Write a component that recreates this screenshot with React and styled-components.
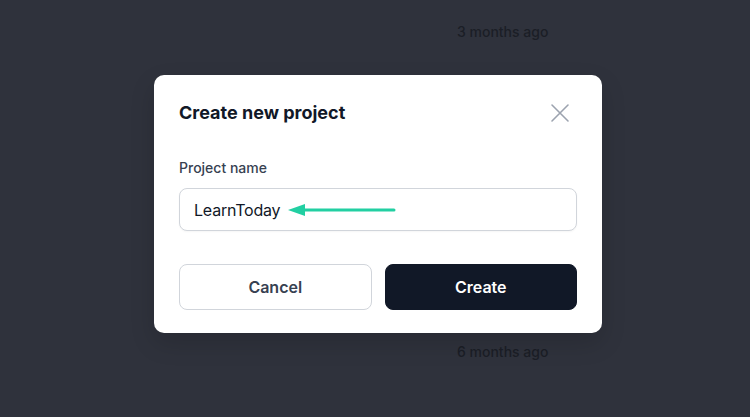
import React from 'react';
import styled, { createGlobalStyle } from 'styled-components';

const Global = createGlobalStyle`
  html, body {
    margin: 0;
    padding: 0;
    background: #2f323c;
  }
  body {
    font-family: 'Inter', 'Liberation Sans', sans-serif;
  }
`;

const Page = styled.div`
  position: relative;
  width: 750px;
  height: 417px;
  overflow: hidden;
  background: #2f323c;
`;

const List = styled.div`
  display: flex;
  flex-direction: column;
  padding: 22px 0 0 457px;
`;

const ListRow = styled.div`
  height: 320px;
  font-size: 14px;
  line-height: 20px;
  font-weight: 500;
  color: #1b1e26;

  &:last-child {
    height: auto;
  }
`;

const Overlay = styled.div`
  position: absolute;
  inset: 0;
  display: flex;
  align-items: flex-start;
  padding: 75px 0 0 154px;
`;

const Dialog = styled.div`
  width: 448px;
  box-sizing: border-box;
  padding: 24px 25px 23px;
  background: #ffffff;
  border-radius: 10px;
  box-shadow: 0 10px 25px rgba(0, 0, 0, 0.15);
`;

const Header = styled.div`
  display: flex;
  align-items: center;
  justify-content: space-between;
`;

const Title = styled.h2`
  margin: 0;
  font-size: 18px;
  line-height: 28px;
  font-weight: 700;
  color: #111827;
`;

const CloseButton = styled.button`
  display: flex;
  padding: 0;
  margin-right: 7px;
  border: none;
  background: none;
  color: #9ca3af;
  cursor: pointer;
`;

const Label = styled.label`
  display: block;
  margin-top: 31px;
  font-size: 14px;
  line-height: 20px;
  font-weight: 500;
  color: #374151;
`;

const Field = styled.div`
  position: relative;
  margin-top: 10px;
`;

const Input = styled.input`
  width: 100%;
  height: 43px;
  box-sizing: border-box;
  padding: 0 14px;
  border: 1px solid #d1d5db;
  border-radius: 8px;
  font-family: inherit;
  font-size: 16px;
  letter-spacing: -0.2px;
  color: #111827;
  outline: none;
  box-shadow: 0 1px 2px rgba(0, 0, 0, 0.04);
`;

const Pointer = styled.svg`
  position: absolute;
  left: 108px;
  top: 15px;
`;

const Actions = styled.div`
  display: grid;
  grid-template-columns: 1fr 1fr;
  gap: 13px;
  margin-top: 33px;
`;

const Button = styled.button`
  height: 46px;
  border-radius: 8px;
  font-family: inherit;
  font-size: 16px;
  font-weight: 600;
  cursor: pointer;
  border: 1px solid ${(p) => (p.$primary ? '#111827' : '#d1d5db')};
  background: ${(p) => (p.$primary ? '#111827' : '#ffffff')};
  color: ${(p) => (p.$primary ? '#ffffff' : '#374151')};
`;

export default function App() {
  return (
    <Page>
      <Global />
      <List>
        <ListRow>3 months ago</ListRow>
        <ListRow>6 months ago</ListRow>
      </List>
      <Overlay>
        <Dialog>
          <Header>
            <Title>Create new project</Title>
            <CloseButton aria-label="Close">
              <svg width="20" height="20" viewBox="0 0 20 20" fill="none" stroke="currentColor" strokeWidth="1.6" strokeLinecap="round">
                <path d="M2 2 L18 18 M18 2 L2 18" />
              </svg>
            </CloseButton>
          </Header>
          <Label htmlFor="project-name">Project name</Label>
          <Field>
            <Input id="project-name" defaultValue="LearnToday" />
            <Pointer width="110" height="14" viewBox="0 0 110 14">
              <path d="M1 7 L18 1 L18 13 Z" fill="#22cfa2" />
              <path d="M16 7 L107 7" stroke="#22cfa2" strokeWidth="3" strokeLinecap="round" />
            </Pointer>
          </Field>
          <Actions>
            <Button>Cancel</Button>
            <Button $primary>Create</Button>
          </Actions>
        </Dialog>
      </Overlay>
    </Page>
  );
}
